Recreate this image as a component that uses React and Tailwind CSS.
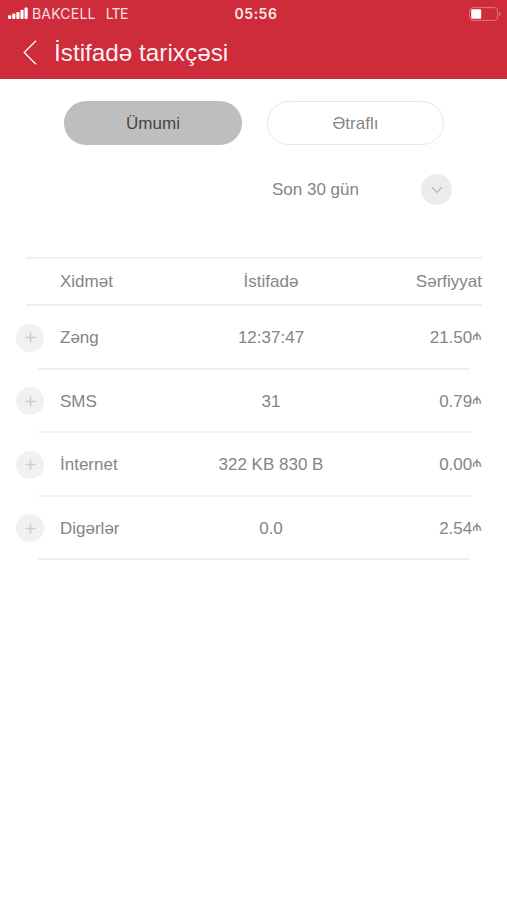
const rows = [
  { name: "Zəng", usage: "12:37:47", cost: "21.50" },
  { name: "SMS", usage: "31", cost: "0.79" },
  { name: "İnternet", usage: "322 KB 830 B", cost: "0.00" },
  { name: "Digərlər", usage: "0.0", cost: "2.54" },
];

const SignalIcon = () => (
  <svg width="21" height="13" viewBox="0 0 21 13" fill="#fff">
    <rect x="0" y="8.2" width="3.2" height="3.8" rx="1" />
    <rect x="4.2" y="6.6" width="3.2" height="5.4" rx="1" />
    <rect x="8.3" y="5" width="3.2" height="7" rx="1" />
    <rect x="12.4" y="2.8" width="3.2" height="9.2" rx="1" />
    <rect x="16.5" y="0.4" width="3.2" height="11.6" rx="1" />
  </svg>
);

const BatteryIcon = () => (
  <svg width="32" height="14" viewBox="0 0 32 14" fill="none">
    <rect x="0.6" y="0.6" width="28" height="12.8" rx="3.4" stroke="#e07582" strokeWidth="1" />
    <rect x="2.2" y="2.2" width="10" height="9.6" rx="1.2" fill="#fff" />
    <path d="M30 5v4c1-.3 1.5-1 1.5-2s-.5-1.7-1.5-2z" fill="#e07582" />
  </svg>
);

const PlusButton = () => (
  <button className="flex size-7 items-center justify-center rounded-full bg-[#f1f1f1]">
    <svg width="11" height="11" viewBox="0 0 11 11" stroke="#cccccc" strokeWidth="1.6">
      <path d="M5.5 .5v10M.5 5.5h10" />
    </svg>
  </button>
);

const Header = () => (
  <header className="h-[79px] bg-[#ce2b3b] text-white">
    <div className="grid h-[27px] grid-cols-[1fr_auto_1fr] items-center pl-2 pr-[6px] font-['Inter',sans-serif] text-sm leading-none">
      <div className="flex items-center">
        <SignalIcon />
        <span className="ml-[3px] tracking-[0.2px] text-white/85">BAKCELL</span>
        <span className="ml-[10px] tracking-[-0.6px] text-white/85">LTE</span>
      </div>
      <span className="pl-[3px] font-semibold tracking-[0.5px] text-white/90">05:56</span>
      <div className="flex justify-end">
        <BatteryIcon />
      </div>
    </div>
    <div className="flex h-[51px] items-center pl-[23px]">
      <svg width="14" height="25" viewBox="0 0 14 25" fill="none" stroke="#fff" strokeWidth="1.3">
        <path d="M13 .7L1.2 12.5 13 24.3" />
      </svg>
      <h1 className="ml-[17px] pt-[2px] text-[24.3px] leading-none text-white/95">İstifadə tarixçəsi</h1>
    </div>
  </header>
);

const App = () => {
  return (
    <div className="min-h-screen bg-white font-['Liberation_Sans',Arial,sans-serif] text-[17px] text-[#858585]">
      <Header />

      <div className="flex gap-[25px] pl-16 pt-[22px]">
        <button className="h-11 w-[178px] rounded-full bg-[#bebebe] pt-px text-[#444]">Ümumi</button>
        <button className="h-11 w-[177px] rounded-full border border-[#e9e9e9] pt-px">Ətraflı</button>
      </div>

      <div className="mt-[29px] flex h-[31px] items-center justify-between pl-[272px] pr-[55px]">
        <span>Son 30 gün</span>
        <button className="flex size-[31px] items-center justify-center rounded-full bg-[#ececec]">
          <svg width="12" height="8" viewBox="0 0 12 8" fill="none" stroke="#bdbdbd" strokeWidth="1.6">
            <path d="M1 1.2l5 5 5-5" />
          </svg>
        </button>
      </div>

      <div className="mt-[52px]">
        <div className="ml-[26px] mr-[25px] grid h-[49px] grid-cols-[147px_196px_1fr] items-center border-y-2 border-[#f0f0f0] pl-[34px]">
          <span>Xidmət</span>
          <span className="-ml-[68px] text-center">İstifadə</span>
          <span className="-ml-4 text-right">Sərfiyyat</span>
        </div>

        {rows.map((row) => (
          <div key={row.name}>
            <div className="grid h-[61.5px] grid-cols-[44px_147px_160px_1fr] items-center pl-4 pr-[25.5px] pt-[2px]">
              <PlusButton />
              <span>{row.name}</span>
              <span className="-ml-[32px] text-center">{row.usage}</span>
              <span className="flex items-center justify-end">
                {row.cost}
                <span className="-mt-[5px] font-['Roboto',sans-serif] text-sm leading-none">₼</span>
              </span>
            </div>
            <div className="ml-[38px] mr-[37px] h-[2px] bg-[#f1f1f1]" />
          </div>
        ))}
      </div>
    </div>
  );
};

export default App;
